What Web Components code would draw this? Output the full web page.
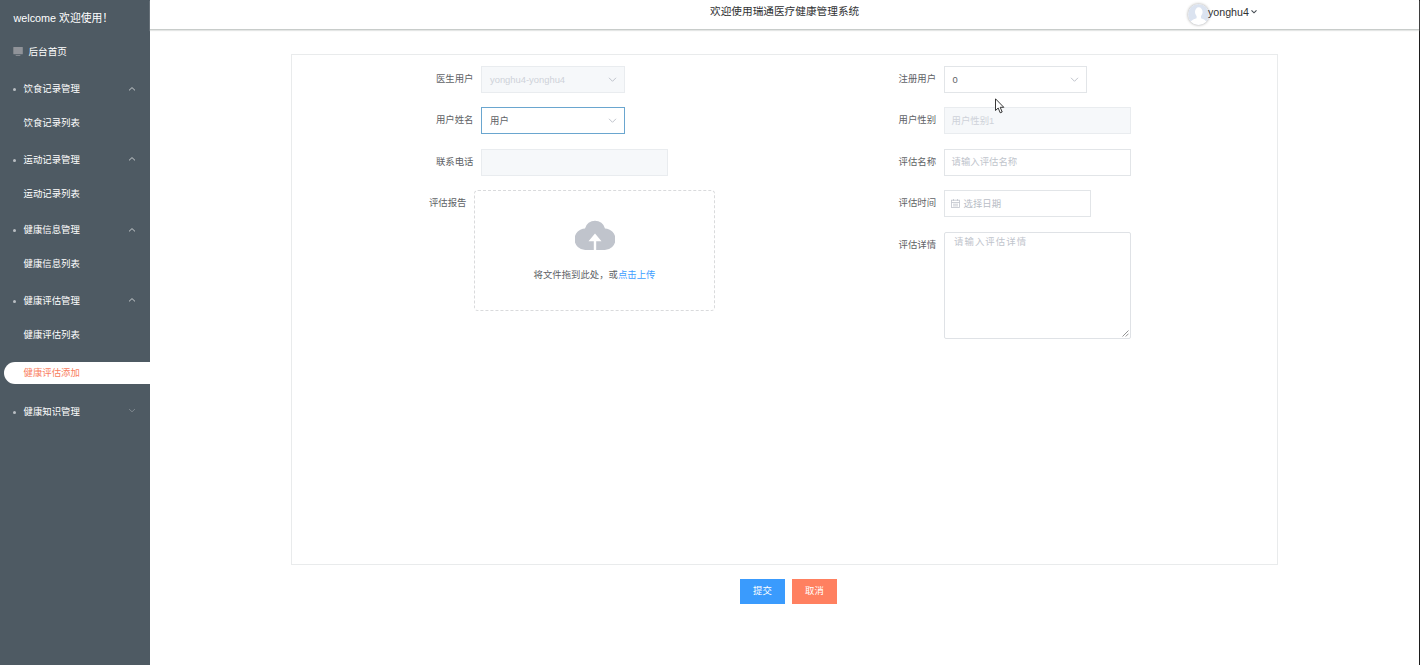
<!DOCTYPE html>
<html lang="zh-CN">
<head>
<meta charset="utf-8">
<title>瑞通医疗健康管理系统</title>
<style>
  body {
    margin: 0;
    width: 1422px;
    height: 665px;
    overflow: hidden;
    background: #fff;
    color: #606266;
    font-family: "Liberation Sans", "Noto Sans CJK SC", sans-serif;
    font-size: 9.4px;
  }
</style>
</head>
<body>
<admin-layout>
  <side-bar slot="side">
    <side-group label="饮食记录管理" open>
      <side-item>饮食记录列表</side-item>
    </side-group>
    <side-group label="运动记录管理" open>
      <side-item>运动记录列表</side-item>
    </side-group>
    <side-group label="健康信息管理" open>
      <side-item>健康信息列表</side-item>
    </side-group>
    <side-group label="健康评估管理" open>
      <side-item>健康评估列表</side-item>
      <side-item active>健康评估添加</side-item>
    </side-group>
    <side-group label="健康知识管理"></side-group>
  </side-bar>
  <top-bar slot="top" user="yonghu4">欢迎使用瑞通医疗健康管理系统</top-bar>
  <form-panel>
    <form-row slot="left" label="医生用户">
      <select-box style="--w: 144px" disabled>yonghu4-yonghu4</select-box>
    </form-row>
    <form-row slot="left" label="用户姓名">
      <select-box style="--w: 144px" focused>用户</select-box>
    </form-row>
    <form-row slot="left" label="联系电话">
      <input-box disabled></input-box>
    </form-row>
    <form-row slot="left" label="评估报告" tight>
      <upload-box></upload-box>
    </form-row>
    <form-row slot="right" label="注册用户">
      <select-box style="--w: 143px">0</select-box>
    </form-row>
    <form-row slot="right" label="用户性别">
      <input-box disabled>用户性别1</input-box>
    </form-row>
    <form-row slot="right" label="评估名称">
      <input-box>请输入评估名称</input-box>
    </form-row>
    <form-row slot="right" label="评估时间">
      <date-box>选择日期</date-box>
    </form-row>
    <form-row slot="right" label="评估详情">
      <text-area>请输入评估详情</text-area>
    </form-row>
  </form-panel>
  <action-button style="--bg: #3a9bfd" slot="actions">提交</action-button>
  <action-button style="--bg: #ff8060" slot="actions">取消</action-button>
</admin-layout>
<mouse-pointer></mouse-pointer>

<script>
// small base class: puts the markup of render() in an open shadow root
class BaseElement extends HTMLElement {
  constructor() {
    super();
    this.attachShadow({ mode: 'open' });
  }

  connectedCallback() {
    this.shadowRoot.innerHTML = this.render();
  }
}

class AdminLayout extends BaseElement {
  render() {
    return `
      <style>
        :host {
          display: flex;
          height: 665px;
        }
        .main {
          display: flex;
          flex-direction: column;
          width: 1269px;
          border-right: 1px solid #1d1d1d;
        }
        .content {
          padding: 24px 141px 0;
        }
        .actions {
          display: flex;
          gap: 7px;
          padding: 14px 0 0 449px;
        }
      </style>
      <slot name="side"></slot>
      <div class="main">
        <slot name="top"></slot>
        <div class="content">
          <slot></slot>
          <div class="actions"><slot name="actions"></slot></div>
        </div>
      </div>
    `;
  }
}

class SideBar extends BaseElement {
  render() {
    return `
      <style>
        :host {
          display: block;
          flex: none;
          box-sizing: border-box;
          width: 150px;
          height: 100%;
          background: #4e5a63;
          color: #fff;
        }
        .welcome {
          height: 35px;
          line-height: 36px;
          padding-left: 13.5px;
          font-size: 10.8px;
        }
        .home {
          display: flex;
          align-items: center;
          gap: 5.5px;
          height: 31.5px;
          padding-left: 13px;
          margin-bottom: 3.4px;
          font-size: 9.6px;
        }
      </style>
      <div class="welcome">welcome 欢迎使用！</div>
      <div class="home">
        <svg width="10" height="10" viewBox="0 0 10 10" fill="#909399">
          <rect x="0.3" y="1" width="9.5" height="7.2" rx="0.5"/>
          <rect x="2.7" y="9" width="4.6" height="0.8"/>
        </svg>
        <span>后台首页</span>
      </div>
      <slot></slot>
    `;
  }
}

class SideGroup extends BaseElement {
  render() {
    const open = this.hasAttribute('open');
    return `
      <style>
        :host {
          display: block;
          margin-bottom: 2px;
        }
        .title {
          display: flex;
          align-items: center;
          height: 37.3px;
          padding: 0 14px 0 12.5px;
        }
        .title span {
          margin-top: -1px;
        }
        .dot {
          width: 3px;
          height: 3px;
          margin: 2px 8px 0 0;
          border-radius: 50%;
          background: #b9bec3;
        }
        svg {
          margin-left: auto;
        }
      </style>
      <div class="title">
        <i class="dot"></i>
        <span>${this.getAttribute('label')}</span>
        <svg width="8" height="8" viewBox="0 0 8 8" fill="none" stroke="${open ? '#c6cacd' : '#7d868d'}">
          <path d="${open ? 'M1 5.4 4 2.6 7 5.4' : 'M1 2 4 4.8 7 2'}"/>
        </svg>
      </div>
      <slot></slot>
    `;
  }
}

class SideItem extends BaseElement {
  render() {
    return `
      <style>
        :host {
          display: block;
          height: 31.3px;
          line-height: 31px;
          padding-left: 23.5px;
        }
        :host([active]) {
          height: 22.7px;
          line-height: 21px;
          margin: 11.3px 0 8.3px 4px;
          padding-left: 19.5px;
          border-radius: 12px 0 0 12px;
          background: #fff;
          color: #f98060;
        }
      </style>
      <slot></slot>
    `;
  }
}

class TopBar extends BaseElement {
  render() {
    return `
      <style>
        :host {
          display: flex;
          flex: none;
          box-sizing: border-box;
          height: 30px;
          border-bottom: 1px solid #c8ccca;
          box-shadow: 0 1px 1px #e4e6e5;
          color: #303133;
          font-size: 10.67px;
          line-height: 23px;
        }
        .title {
          width: 477px;
          padding-left: 560px;
        }
        .user {
          display: flex;
          line-height: 24px;
        }
        .avatar {
          width: 21px;
          height: 21px;
          margin: 4px -1px 0 1px;
          border-radius: 50%;
          box-shadow: 0 0 3px #999;
        }
        .arrow {
          margin: 8px 0 0 1px;
        }
      </style>
      <div class="title"><slot></slot></div>
      <div class="user">
        <svg class="avatar" viewBox="0 0 22 22">
          <clipPath id="round"><circle cx="11" cy="11" r="11"/></clipPath>
          <g clip-path="url(#round)">
            <rect width="22" height="22" fill="#dbe3f0"/>
            <ellipse cx="11.3" cy="8.3" rx="4" ry="4.8" fill="#fff"/>
            <path d="M9 12h4.600v3q4 1 5.400 3v5H3v-5q2-2 6-3z" fill="#fff"/>
          </g>
        </svg>
        <span>${this.getAttribute('user')}</span>
        <svg class="arrow" width="8" height="8" viewBox="0 0 8 8" fill="none" stroke="#41484f" stroke-width="1.1">
          <path d="M1.500 2.300 4 4.800 6.500 2.300"/>
        </svg>
      </div>
    `;
  }
}

class FormPanel extends BaseElement {
  render() {
    return `
      <style>
        :host {
          display: grid;
          grid-template-columns: 462.600px 1fr;
          box-sizing: border-box;
          height: 511px;
          padding: 11px 0 0 129px;
          border: 1px solid #e9ebec;
        }
        .col {
          display: flex;
          flex-direction: column;
          gap: 14.400px;
        }
      </style>
      <div class="col"><slot name="left"></slot></div>
      <div class="col"><slot name="right"></slot></div>
    `;
  }
}

class FormRow extends BaseElement {
  render() {
    return `
      <style>
        :host {
          display: flex;
          min-height: 27px;
        }
        .label {
          width: 52.500px;
          margin-right: 7.500px;
          line-height: 25px;
          text-align: right;
        }
        :host([tight]) .label {
          width: 45.500px;
        }
      </style>
      <span class="label">${this.getAttribute('label')}</span>
      <slot></slot>
    `;
  }
}

const boxStyle = `
  :host {
    display: flex;
    align-items: center;
    box-sizing: border-box;
    width: var(--w, 187px);
    height: 27px;
    padding: 0 7px 1px 8px;
    border: 1px solid #e2e5e8;
    background: #fff;
  }
  :host([disabled]) {
    background: #f6f8fa;
    border-color: #e9ecef;
    color: #ced2d9;
  }
`;

class SelectBox extends BaseElement {
  render() {
    return `
      <style>
        ${boxStyle}
        :host([focused]) {
          border-color: #6aa6cf;
        }
        svg {
          margin: 1px 0 0 auto;
        }
      </style>
      <slot></slot>
      <svg width="9" height="9" viewBox="0 0 9 9" fill="none" stroke="#c0c4cc">
        <path d="M1 2.800 4.500 6.300 8 2.800"/>
      </svg>
    `;
  }
}

class InputBox extends BaseElement {
  render() {
    return `
      <style>
        ${boxStyle}
        :host {
          padding: 0 7px 2px;
          color: #c0c4cc;
        }
      </style>
      <slot></slot>
    `;
  }
}

class DateBox extends BaseElement {
  render() {
    return `
      <style>
        ${boxStyle}
        :host {
          width: 147px;
          gap: 4px;
          padding-left: 6px;
          color: #b8bdc6;
        }
      </style>
      <svg width="9" height="9" viewBox="0 0 9 9" fill="none" stroke="#c0c4cc" stroke-width="0.8">
        <rect x="0.5" y="1.2" width="8" height="7.300"/>
        <path d="M0.500 3.500h8M2.500 0v2M6.500 0v2M2 5.200h5M2 6.900h5"/>
      </svg>
      <slot></slot>
    `;
  }
}

class TextArea extends BaseElement {
  render() {
    return `
      <style>
        :host {
          display: flex;
          justify-content: space-between;
          box-sizing: border-box;
          width: 187px;
          height: 107px;
          padding: 0 1px 1px 9.500px;
          border: 1px solid #dfe2e6;
          border-radius: 2px;
          color: #c0c4cc;
          letter-spacing: 1.050px;
          line-height: 18px;
        }
        svg {
          align-self: flex-end;
        }
      </style>
      <slot></slot>
      <svg width="7" height="7" viewBox="0 0 7 7" stroke="#777" stroke-width="0.8">
        <path d="M0.500 6.500 6.500 0.500M3.700 6.500 6.500 3.700"/>
      </svg>
    `;
  }
}

class UploadBox extends BaseElement {
  render() {
    return `
      <style>
        :host {
          display: flex;
          flex-direction: column;
          align-items: center;
          box-sizing: border-box;
          width: 241px;
          height: 120.500px;
          padding-top: 29px;
          border: 1px dashed #d9dadc;
          border-radius: 4px;
        }
        p {
          margin: 16.500px 0 0;
          line-height: 14px;
        }
        a {
          color: #409eff;
        }
      </style>
      <svg width="40" height="31" viewBox="0 0 40 31">
        <path d="M10 8.500A10.300 10.300 0 0 1 30 8.500 10.700 10.700 0 0 1 29.500 30H10.500A10.700 10.700 0 0 1 10 8.500Z" fill="#c0c4cc"/>
        <path d="M20 13.500 26.500 21.300H21.200V30H18.800V21.300H13.500Z" fill="#fff"/>
      </svg>
      <p>将文件拖到此处，或<a>点击上传</a></p>
    `;
  }
}

class ActionButton extends BaseElement {
  render() {
    return `
      <style>
        :host {
          display: block;
          width: 45px;
          height: 25px;
          line-height: 23px;
          text-align: center;
          color: #fff;
          background: var(--bg);
        }
      </style>
      <slot></slot>
    `;
  }
}

class MousePointer extends BaseElement {
  render() {
    return `
      <style>
        :host {
          position: absolute;
          left: 995px;
          top: 98px;
          line-height: 0;
        }
      </style>
      <svg width="10" height="16" viewBox="0 0 10 16">
        <path d="M0.500 0.800V12.500L3.200 10 5.200 14.800 7.200 14 5.200 9.300H8.800Z" fill="#fff" stroke="#222" stroke-width="0.9"/>
      </svg>
    `;
  }
}

customElements.define('admin-layout', AdminLayout);
customElements.define('side-bar', SideBar);
customElements.define('side-group', SideGroup);
customElements.define('side-item', SideItem);
customElements.define('top-bar', TopBar);
customElements.define('form-panel', FormPanel);
customElements.define('form-row', FormRow);
customElements.define('select-box', SelectBox);
customElements.define('input-box', InputBox);
customElements.define('date-box', DateBox);
customElements.define('text-area', TextArea);
customElements.define('upload-box', UploadBox);
customElements.define('action-button', ActionButton);
customElements.define('mouse-pointer', MousePointer);
</script>
</body>
</html>
